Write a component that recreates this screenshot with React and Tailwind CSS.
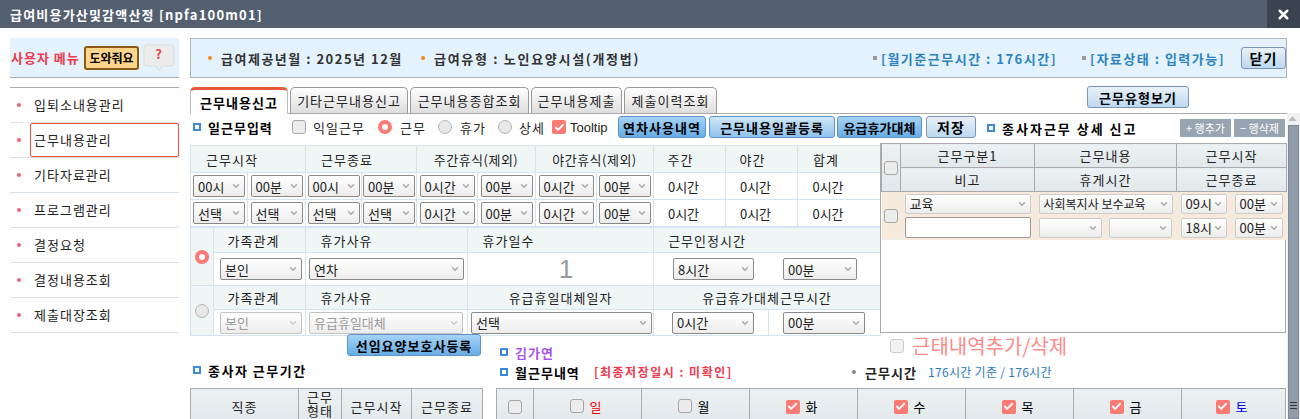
import { ChevronDown, Check, X } from "lucide-react";

const menus = ["입퇴소내용관리", "근무내용관리", "기타자료관리", "프로그램관리", "결정요청", "결정내용조회", "제출대장조회"];
const tabs = [
  { name: "기타근무내용신고", w: "w-[118px]" },
  { name: "근무내용종합조회", w: "w-[119px]" },
  { name: "근무내용제출", w: "w-[91px]" },
  { name: "제출이력조회", w: "w-[93px]" },
];
const days = [
  { name: "일", on: false, color: "text-[#f00000]" },
  { name: "월", on: false, color: "text-black" },
  { name: "화", on: true, color: "text-black" },
  { name: "수", on: true, color: "text-black" },
  { name: "목", on: true, color: "text-black" },
  { name: "금", on: true, color: "text-black" },
  { name: "토", on: true, color: "text-[#0000e0]" },
];

const Bullet = () => <span className="inline-block w-[8px] h-[8px] border-2 border-[#3b8ad8] bg-white shrink-0"></span>;

const Select = ({ label, className = "", disabled = false }) => (
  <div className={`h-[22px] flex items-center justify-between pl-[4px] pr-[3px] border rounded-[2px] tracking-normal bg-gradient-to-b from-white to-[#ececec] ${disabled ? "border-[#c4c4c4] text-[#9a9a9a]" : "border-[#8a8a8a] text-[#222]"} ${className}`}>
    <span className="whitespace-nowrap">{label}</span>
    <ChevronDown className={`w-[10px] h-[10px] shrink-0 ${disabled ? "text-[#ccc]" : "text-[#aaa]"}`} strokeWidth={3.5} />
  </div>
);

const Radio = ({ on, className = "" }) =>
  on ? (
    <span className={`inline-flex items-center justify-center w-[14px] h-[14px] rounded-full bg-[#fb7b74] shrink-0 ${className}`}>
      <span className="w-[6px] h-[6px] rounded-full bg-white"></span>
    </span>
  ) : (
    <span className={`inline-block w-[14px] h-[14px] rounded-full border border-[#b5b5b5] bg-[#e8e8e8] shrink-0 ${className}`}></span>
  );

const Checkbox = ({ on, className = "" }) =>
  on ? (
    <span className={`inline-flex items-center justify-center w-[14px] h-[14px] rounded-[2px] bg-[#fb7b74] shrink-0 ${className}`}>
      <Check className="w-[11px] h-[11px] text-white" strokeWidth={4} />
    </span>
  ) : (
    <span className={`inline-block w-[14px] h-[14px] rounded-[3px] border border-[#a5a5a5] bg-[#ececec] shrink-0 ${className}`}></span>
  );

const BlueBtn = ({ children, className = "" }) => (
  <button className={`h-[22px] shrink-0 rounded-[3px] border border-[#5f93c9] bg-gradient-to-b from-[#a5d3f5] to-[#66ade6] font-bold text-black tracking-[1px] whitespace-nowrap ${className}`}>{children}</button>
);

const PaleBtn = ({ children, className = "" }) => (
  <button className={`h-[22px] shrink-0 rounded-[3px] border border-[#7b93b8] bg-gradient-to-b from-[#e9f1f8] to-[#bcd9f0] font-bold text-black tracking-[1px] whitespace-nowrap ${className}`}>{children}</button>
);

const Th = ({ children, className = "", ...rest }) => (
  <td {...rest} className={`border border-[#d6e3ef] bg-[#f0f6f6] text-center text-[#222] p-0 ${className}`}>{children}</td>
);

const Td = ({ children, className = "", ...rest }) => (
  <td {...rest} className={`border border-[#d6e3ef] bg-white text-center text-[#222] p-0 ${className}`}>{children}</td>
);

const Gh = ({ children, className = "", ...rest }) => (
  <td {...rest} className={`border border-[#aaaaaa] bg-gradient-to-b from-[#edf1f3] to-[#e1e7ea] text-center text-[#222] p-0 ${className}`}>{children}</td>
);

const TimeRow = ({ values }) => (
  <tr className="h-[27px]">
    {values.map((v, i) => (
      <Td key={i}>
        <Select label={v} className={i === 4 || i === 6 ? "w-[55px] mx-auto" : "w-[52px] mx-auto"} />
      </Td>
    ))}
    <Td className="pr-[12px] tracking-normal">0시간</Td>
    <Td className="pr-[12px] tracking-normal">0시간</Td>
    <Td className="pr-[22px] tracking-normal">0시간</Td>
  </tr>
);

export default function App() {
  return (
    <div className="w-[1300px] h-[419px] overflow-hidden bg-white font-['Noto_Sans_CJK_KR','Liberation_Sans',sans-serif] text-[13px] leading-none tracking-[1px] text-[#222]">
      {/* title bar */}
      <div className="h-[28px] bg-[#545f70] flex items-center justify-between pl-[10px]">
        <span className="text-white font-bold text-[13px] tracking-[1.2px]">급여비용가산및감액산정 [npfa100m01]</span>
        <div className="w-[33px] h-[28px] bg-[#3a4350] flex items-center justify-center">
          <X className="w-[15px] h-[15px] text-white" strokeWidth={4} />
        </div>
      </div>

      <div className="flex pt-[10px] pl-[10px]">
        {/* side menu */}
        <aside className="w-[169px] shrink-0 mr-[11px]">
          <div className="h-[40px] bg-[#e3f2fd] border-b border-[#aaaaaa] flex items-center pl-[1px]">
            <span className="text-[#f0384e] font-bold w-[73px] whitespace-nowrap">사용자 메뉴</span>
            <span className="w-[55px] h-[24px] rounded-[3px] border-2 border-[#8a5a14] bg-[#fdd58b] flex items-center justify-center text-[12px] font-bold text-black tracking-normal whitespace-nowrap">도와줘요</span>
            <svg width="32" height="28" viewBox="0 0 32 28" className="ml-[4px]">
              <path d="M4 1h24a3 3 0 0 1 3 3v15a3 3 0 0 1-3 3H19l-3 5-3-5H4a3 3 0 0 1-3-3V4a3 3 0 0 1 3-3z" fill="#ececec" stroke="#dddddd" />
              <text x="16" y="15" textAnchor="middle" fontSize="13" fontWeight="700" fill="#e8484a">?</text>
            </svg>
          </div>
          <ul className="mt-[9px] border-t border-[#aaaaaa]">
            {menus.map((m, i) => (
              <li key={m} className={`h-[35px] flex items-center border-b ${i === 0 ? "border-[#e8e8e8]" : "border-[#dbe1e8]"}`}>
                <span className="w-[4px] h-[4px] rounded-full bg-[#f0607a] ml-[7px] mr-[9px] shrink-0"></span>
                {i === 1 ? (
                  <span className="flex-1 h-[34px] flex items-center pl-[3px] pb-[2px] border border-[#f04a3c] rounded-[2px]">{m}</span>
                ) : (
                  <span className="pl-[3px] ml-[1px] pb-[2px]">{m}</span>
                )}
              </li>
            ))}
          </ul>
        </aside>

        <main className="w-[1110px] shrink-0">
          {/* info bar */}
          <div className="h-[40px] w-[1097px] bg-[#e3f2fd] border border-[#b0b5ba] flex items-center font-bold text-[#333] pl-[17px] tracking-[1.5px]">
            <span className="w-[4px] h-[4px] rounded-full bg-[#f08a1c] mr-[9px]"></span>
            <span className="w-[200px] whitespace-nowrap">급여제공년월 : 2025년 12월</span>
            <span className="w-[4px] h-[4px] rounded-full bg-[#f08a1c] mr-[9px]"></span>
            <span className="w-[439px] whitespace-nowrap tracking-[1.7px]">급여유형 : 노인요양시설(개정법)</span>
            <span className="w-[4px] h-[4px] bg-[#999] mr-[4px]"></span>
            <span className="w-[201px] whitespace-nowrap text-[#2c83c0]">[월기준근무시간 : 176시간]</span>
            <span className="w-[4px] h-[4px] bg-[#999] mr-[4px]"></span>
            <span className="w-[151px] whitespace-nowrap text-[#2c83c0]">[자료상태 : 입력가능]</span>
            <PaleBtn className="w-[45px] text-[14px]">닫기</PaleBtn>
          </div>

          {/* tabs */}
          <div className="mt-[9px] h-[27px] w-[1097px] flex items-end border-b border-[#aaaaaa]">
            <div className="w-[98px] h-[27px] -mb-px bg-white border-t-[3px] border-x border-t-[#e8593a] border-x-[#bbbbbb] rounded-t-[5px] flex items-center justify-center font-bold text-black whitespace-nowrap">근무내용신고</div>
            {tabs.map((t) => (
              <div key={t.name} className={`${t.w} h-[26px] ml-[2px] bg-gradient-to-b from-white to-[#dddddd] border border-b-0 border-[#999] rounded-t-[5px] flex items-center justify-center text-[#222] whitespace-nowrap`}>{t.name}</div>
            ))}
            <PaleBtn className="w-[102px] ml-[370px] mb-[5px]">근무유형보기</PaleBtn>
          </div>

          <div className="flex">
            <div className="w-[1097px] shrink-0">
              <div className="flex h-[219px]">
                {/* daily work input */}
                <div className="w-[690px] shrink-0">
                  <div className="h-[31px] w-[786px] relative flex items-center pb-[5px] pl-[3px] whitespace-nowrap">
                    <Bullet />
                    <span className="ml-[7px] w-[84px] font-bold text-black">일근무입력</span>
                    <Checkbox />
                    <span className="ml-[7px] w-[65px]">익일근무</span>
                    <Radio on />
                    <span className="ml-[8px] w-[38px]">근무</span>
                    <Radio />
                    <span className="ml-[8px] w-[38px]">휴가</span>
                    <Radio />
                    <span className="ml-[7px] w-[33px]">상세</span>
                    <Checkbox on />
                    <span className="ml-[4px] w-[48px] font-['Liberation_Sans',sans-serif] tracking-normal">Tooltip</span>
                    <BlueBtn className="w-[88px]">연차사용내역</BlueBtn>
                    <PaleBtn className="w-[126px] ml-[3px] !from-[#cfe6f8] !to-[#8fc3ec] !border-[#5f93c9]">근무내용일괄등록</PaleBtn>
                    <BlueBtn className="w-[85px] ml-[2px] tracking-normal">유급휴가대체</BlueBtn>
                    <PaleBtn className="w-[50px] ml-[4px] text-[14px]">저장</PaleBtn>
                  </div>
                  <table className="table-fixed border-collapse w-[690px]">
                    <colgroup>
                      <col className="w-[57px]" /><col className="w-[58px]" /><col className="w-[56px]" /><col className="w-[55px]" />
                      <col className="w-[61px]" /><col className="w-[58px]" /><col className="w-[61px]" /><col className="w-[57px]" />
                      <col className="w-[72px]" /><col className="w-[72px]" /><col className="w-[83px]" />
                    </colgroup>
                    <tbody>
                      <tr className="h-[27px]">
                        <Th colSpan={2} className="pr-[32px]">근무시작</Th>
                        <Th colSpan={2} className="pr-[28px]">근무종료</Th>
                        <Th colSpan={2} className="tracking-[0.5px]">주간휴식(제외)</Th>
                        <Th colSpan={2} className="tracking-[0.5px]">야간휴식(제외)</Th>
                        <Th className="pr-[18px]">주간</Th>
                        <Th className="pr-[18px]">야간</Th>
                        <Th className="pr-[26px]">합계</Th>
                      </tr>
                      <TimeRow values={["00시", "00분", "00시", "00분", "0시간", "00분", "0시간", "00분"]} />
                      <TimeRow values={["선택", "선택", "선택", "선택", "0시간", "00분", "0시간", "00분"]} />
                    </tbody>
                  </table>
                  <table className="table-fixed border-collapse w-[690px]">
                    <colgroup>
                      <col className="w-[23px]" /><col className="w-[92px]" /><col className="w-[162px]" />
                      <col className="w-[186px]" /><col className="w-[115px]" /><col className="w-[112px]" />
                    </colgroup>
                    <tbody>
                      <tr className="h-[25px]">
                        <Th rowSpan={2}><Radio on className="align-middle" /></Th>
                        <Th className="pr-[12px]">가족관계</Th>
                        <Th className="pr-[80px]">휴가사유</Th>
                        <Th className="pr-[104px]">휴가일수</Th>
                        <Th colSpan={2} className="pr-[120px]">근무인정시간</Th>
                      </tr>
                      <tr className="h-[33px]">
                        <Td><Select label="본인" className="w-[82px] ml-[6px]" /></Td>
                        <Td><Select label="연차" className="w-[155px] ml-[3px]" /></Td>
                        <Td className="pl-[12px] text-[26px] text-[#999] font-['Liberation_Sans',sans-serif]">1</Td>
                        <Td className="border-r-white"><Select label="8시간" className="w-[81px] ml-[19px]" /></Td>
                        <Td><Select label="00분" className="w-[74px] ml-[14px]" /></Td>
                      </tr>
                      <tr className="h-[24px]">
                        <Th rowSpan={2}><Radio className="align-middle" /></Th>
                        <Th className="pr-[12px]">가족관계</Th>
                        <Th className="pr-[80px]">휴가사유</Th>
                        <Th>유급휴일대체일자</Th>
                        <Th colSpan={2}>유급휴가대체근무시간</Th>
                      </tr>
                      <tr className="h-[26px]">
                        <Td><Select disabled label="본인" className="w-[82px] ml-[6px]" /></Td>
                        <Td><Select disabled label="유급휴일대체" className="w-[154px] ml-[3px]" /></Td>
                        <Td><Select label="선택" className="w-[181px] ml-[3px]" /></Td>
                        <Td><Select label="0시간" className="w-[82px] ml-[18px]" /></Td>
                        <Td><Select label="00분" className="w-[82px] ml-[14px]" /></Td>
                      </tr>
                    </tbody>
                  </table>
                </div>

                {/* staff work detail */}
                <div className="w-[406px] shrink-0">
                  <div className="h-[29px] flex items-center pl-[107px] pb-[2px] pt-[1px] whitespace-nowrap">
                    <Bullet />
                    <span className="ml-[7px] font-bold text-black w-[178px] tracking-[2px]">종사자근무 상세 신고</span>
                    <span className="w-[51px] h-[18px] bg-[#98a4b1] text-white text-[11px] flex items-center justify-center tracking-normal">+ 행추가</span>
                    <span className="w-[51px] h-[18px] ml-[3px] bg-[#98a4b1] text-white text-[11px] flex items-center justify-center tracking-normal">− 행삭제</span>
                  </div>
                  <div className="h-[190px] border-x border-b border-[#aaaaaa]">
                    <table className="table-fixed border-collapse w-[405px]">
                      <colgroup>
                        <col className="w-[19px]" /><col className="w-[134px]" /><col className="w-[142px]" /><col className="w-[110px]" />
                      </colgroup>
                      <tbody>
                        <tr className="h-[24px]">
                          <Gh rowSpan={2}><Checkbox className="align-middle" /></Gh>
                          <Gh>근무구분1</Gh>
                          <Gh>근무내용</Gh>
                          <Gh>근무시작</Gh>
                        </tr>
                        <tr className="h-[24px]">
                          <Gh>비고</Gh>
                          <Gh>휴게시간</Gh>
                          <Gh>근무종료</Gh>
                        </tr>
                        <tr className="h-[24px]">
                          <td rowSpan={2} className="bg-[#f5eadc] border-b border-[#eeeeee] text-center p-0"><Checkbox className="align-middle" /></td>
                          <td className="bg-[#f5eadc] p-0 pl-[4px]"><Select label="교육" className="w-[126px] !h-[20px] !border-[#cccccc]" /></td>
                          <td className="bg-[#f5eadc] p-0 pl-[4px]"><Select label="사회복지사 보수교육" className="w-[134px] !h-[20px] !border-[#cccccc] text-[12px]" /></td>
                          <td className="bg-[#f5eadc] p-0">
                            <div className="flex justify-between px-[4px]">
                              <Select label="09시" className="w-[46px] !h-[20px] !border-[#cccccc]" />
                              <Select label="00분" className="w-[48px] !h-[20px] !border-[#cccccc]" />
                            </div>
                          </td>
                        </tr>
                        <tr className="h-[24px]">
                          <td className="bg-[#f5eadc] p-0 pl-[4px]"><div className="w-[126px] h-[21px] bg-white border border-[#999] rounded-[2px]"></div></td>
                          <td className="bg-[#f5eadc] p-0 pl-[4px]">
                            <div className="flex gap-[7px]">
                              <Select label="" className="w-[63px] !h-[20px] !border-[#cccccc]" />
                              <Select label="" className="w-[63px] !h-[20px] !border-[#cccccc]" />
                            </div>
                          </td>
                          <td className="bg-[#f5eadc] p-0">
                            <div className="flex justify-between px-[4px]">
                              <Select label="18시" className="w-[46px] !h-[20px] !border-[#cccccc]" />
                              <Select label="00분" className="w-[48px] !h-[20px] !border-[#cccccc]" />
                            </div>
                          </td>
                        </tr>
                      </tbody>
                    </table>
                  </div>
                </div>
              </div>

              <div className="flex">
                {/* staff period */}
                <div className="w-[292px] shrink-0">
                  <div className="flex justify-end mt-[1px]">
                    <BlueBtn className="w-[134px] mr-[1px]">선임요양보호사등록</BlueBtn>
                  </div>
                  <div className="flex items-center h-[14px] mt-[7px] pl-[3px]">
                    <Bullet />
                    <span className="ml-[7px] font-bold text-black tracking-[1.5px]">종사자 근무기간</span>
                  </div>
                  <table className="table-fixed border-collapse w-[292px] mt-[11px]">
                    <colgroup>
                      <col className="w-[108px]" /><col className="w-[43px]" /><col className="w-[70px]" /><col className="w-[71px]" />
                    </colgroup>
                    <tbody>
                      <tr className="h-[36px]">
                        <Gh>직종</Gh>
                        <Gh className="align-top leading-[14px] pt-px">근무<br />형태</Gh>
                        <Gh>근무시작</Gh>
                        <Gh>근무종료</Gh>
                      </tr>
                    </tbody>
                  </table>
                </div>

                {/* monthly work */}
                <div className="w-[790px] ml-[14px] shrink-0">
                  <div className="relative h-[55px]">
                    <div className="flex items-center pl-[4px] pt-[12px] h-[26px]">
                      <Bullet />
                      <span className="ml-[7px] font-bold text-[#a855e8]">김가연</span>
                    </div>
                    <div className="flex items-center pl-[4px] mt-[6px] h-[14px] whitespace-nowrap">
                      <Bullet />
                      <span className="ml-[7px] w-[79px] font-bold text-black">월근무내역</span>
                      <span className="w-[258px] text-[12px] font-bold text-[#f0384e] tracking-[1.5px]">[최종저장일시 : 미확인]</span>
                      <span className="w-[4px] h-[4px] rounded-full bg-[#888] mr-[9px]"></span>
                      <span className="w-[63px] font-bold text-[#222]">근무시간</span>
                      <span className="text-[#2b7cc0] text-[12px] tracking-[0.3px]">176시간 기준 / 176시간</span>
                    </div>
                    {/* add/remove toggle overlays the gap under the detail table */}
                    <div className="absolute left-[394px] top-[3px] flex items-center">
                      <Checkbox className="!bg-[#f2f2f2] !border-[#cccccc]" />
                      <span className="ml-[8px] text-[20px] tracking-normal text-[#ff8a8a]">근태내역추가/삭제</span>
                    </div>
                  </div>
                  <table className="table-fixed border-collapse w-[789px]">
                    <colgroup>
                      <col className="w-[37px]" /><col className="w-[108px]" /><col className="w-[108px]" /><col className="w-[108px]" />
                      <col className="w-[108px]" /><col className="w-[108px]" /><col className="w-[108px]" /><col className="w-[104px]" />
                    </colgroup>
                    <tbody>
                      <tr className="h-[36px]">
                        <Gh><Checkbox className="align-middle" /></Gh>
                        {days.map((d) => (
                          <Gh key={d.name}>
                            <span className="inline-flex items-center gap-[6px] pr-[3px]">
                              <Checkbox on={d.on} />
                              <span className={d.color}>{d.name}</span>
                            </span>
                          </Gh>
                        ))}
                      </tr>
                    </tbody>
                  </table>
                </div>
              </div>
            </div>

            {/* scrollbar */}
            <div className="w-[13px] h-[306px] bg-[#f0f0f0] flex flex-col -mt-px">
              <svg width="11" height="12" viewBox="0 0 11 12" className="shrink-0">
                <path d="M5.5 3L9.5 8H1.5z" fill="#bcbcbc" />
              </svg>
              <div className="flex-1 w-[11px] ml-px bg-[#919dab] border border-[#7d8996] flex items-end justify-center pb-[9px]">
                <span className="w-[7px] h-[7px] border-y border-[#333] flex items-center">
                  <span className="w-full h-px bg-[#333]"></span>
                </span>
              </div>
            </div>
          </div>
        </main>
      </div>
    </div>
  );
}
